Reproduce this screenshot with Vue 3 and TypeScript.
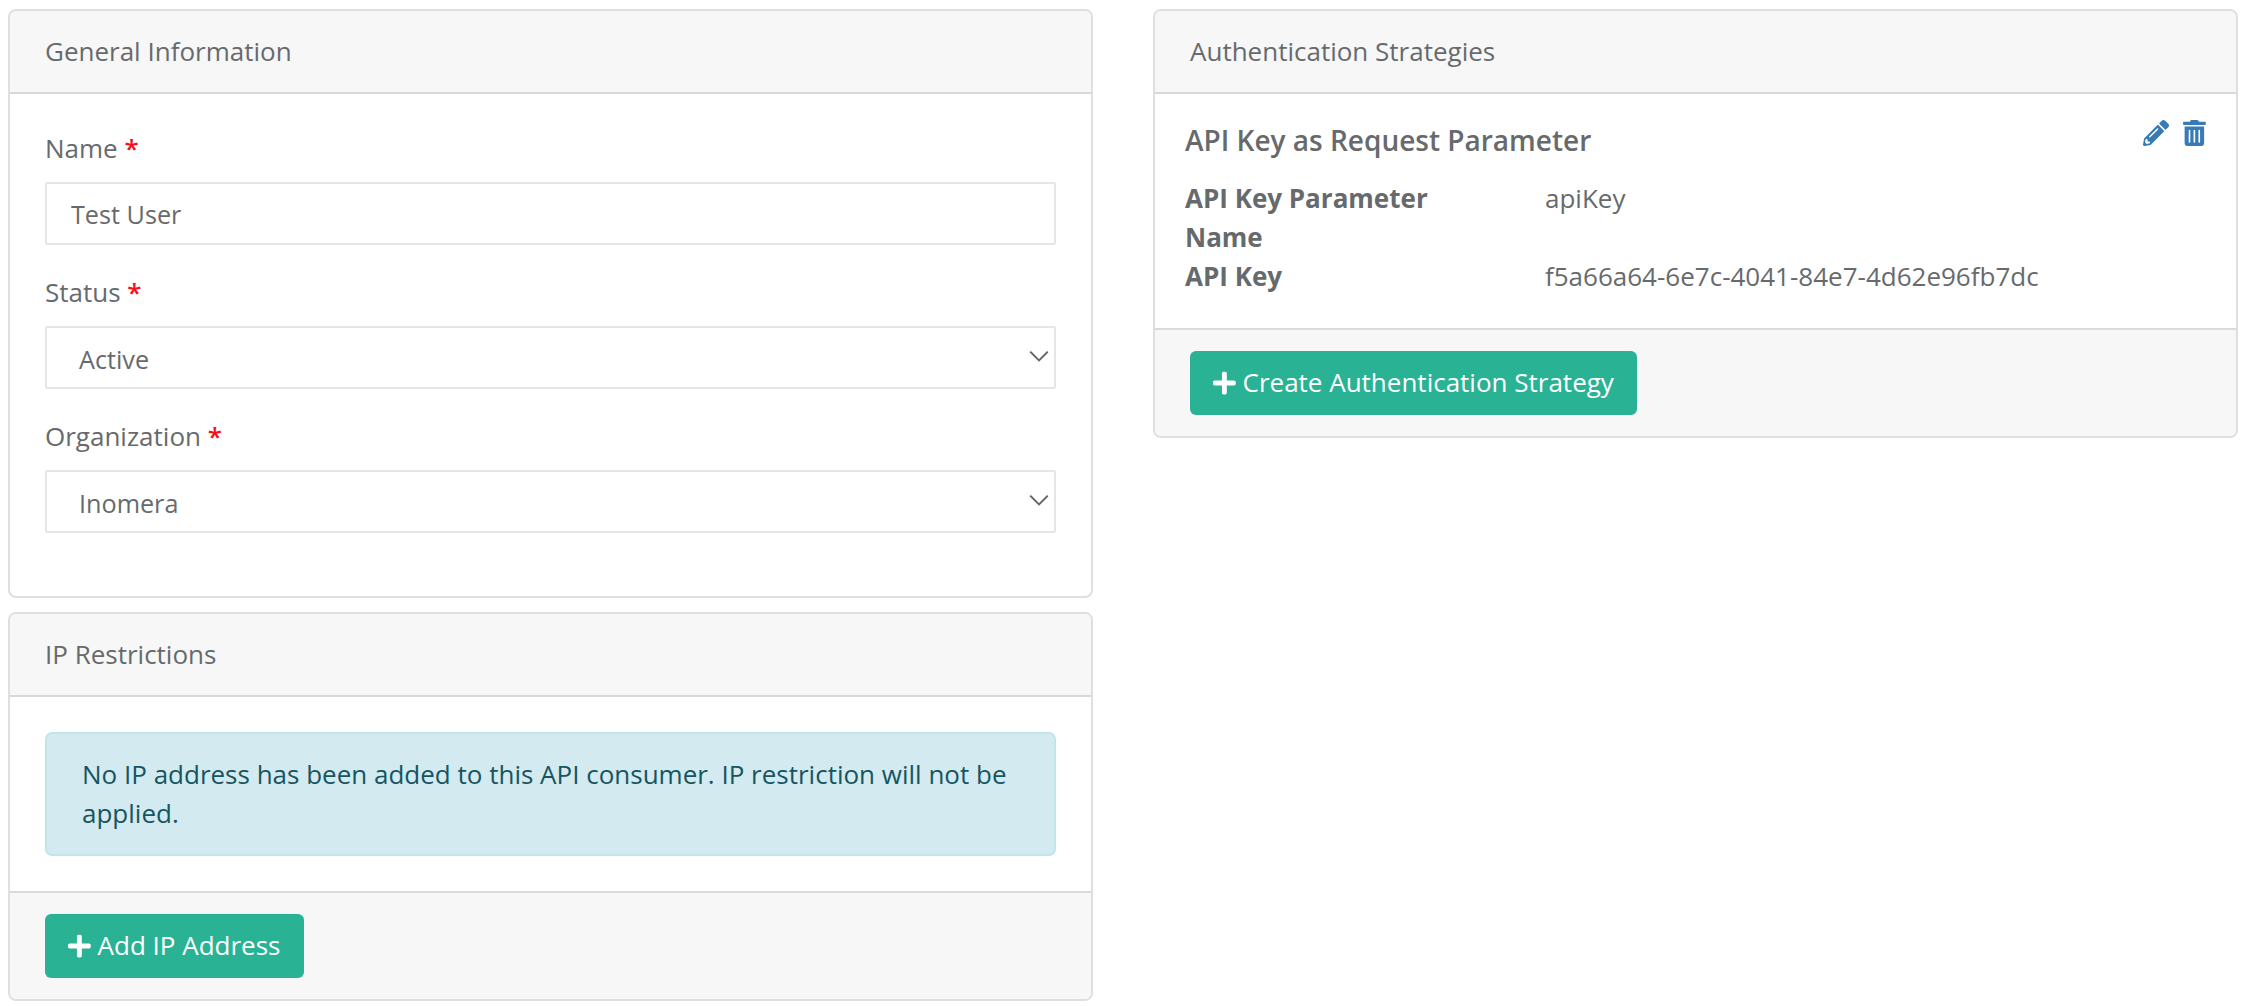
<script setup lang="ts">
import { ref } from 'vue'

const name = ref('Test User')
const status = 'Active'
const organization = 'Inomera'

const details = [
  { label: 'API Key Parameter Name', value: 'apiKey' },
  { label: 'API Key', value: 'f5a66a64-6e7c-4041-84e7-4d62e96fb7dc' },
]

const plusPath =
  'M416 208H272V64c0-17.67-14.33-32-32-32h-32c-17.67 0-32 14.33-32 32v144H32c-17.67 0-32 14.33-32 32v32c0 17.67 14.33 32 32 32h144v144c0 17.67 14.33 32 32 32h32c17.67 0 32-14.33 32-32V304h144c17.67 0 32-14.33 32-32v-32c0-17.67-14.33-32-32-32z'
</script>

<template>
  <main class="page">
    <div class="column">
      <section class="card">
        <header class="card-header">General Information</header>
        <div class="card-body form">
          <div class="field">
            <label for="name">Name <span class="required">*</span></label>
            <input id="name" v-model="name" class="control" type="text" />
          </div>
          <div class="field">
            <label>Status <span class="required">*</span></label>
            <div class="control select" role="combobox" tabindex="0">
              <span>{{ status }}</span>
              <svg class="chevron" viewBox="0 0 20 12"><path d="M1.8 1.3 10 9.4 18.2 1.3" /></svg>
            </div>
          </div>
          <div class="field">
            <label>Organization <span class="required">*</span></label>
            <div class="control select" role="combobox" tabindex="0">
              <span>{{ organization }}</span>
              <svg class="chevron" viewBox="0 0 20 12"><path d="M1.8 1.3 10 9.4 18.2 1.3" /></svg>
            </div>
          </div>
        </div>
      </section>

      <section class="card">
        <header class="card-header">IP Restrictions</header>
        <div class="card-body">
          <div class="alert">
            No IP address has been added to this API consumer. IP restriction will not be applied.
          </div>
        </div>
        <footer class="card-footer">
          <button class="btn" type="button">
            <svg class="plus" viewBox="0 0 448 512"><path :d="plusPath" /></svg>
            <span>Add IP Address</span>
          </button>
        </footer>
      </section>
    </div>

    <div class="column">
      <section class="card">
        <header class="card-header">Authentication Strategies</header>
        <div class="strategy">
          <div class="strategy-head">
            <h5>API Key as Request Parameter</h5>
            <div class="actions">
              <svg class="pencil" viewBox="0 0 512 512">
                <path
                  d="M497.9 142.1l-46.1 46.1c-4.7 4.7-12.3 4.7-17 0l-111-111c-4.7-4.7-4.7-12.3 0-17l46.1-46.1c18.7-18.7 49.1-18.7 67.9 0l60.1 60.1c18.8 18.7 18.8 49.1 0 67.9zM284.2 99.8L21.6 362.4.4 483.9c-2.9 16.4 11.4 30.6 27.8 27.8l121.5-21.3 262.6-262.6c4.7-4.7 4.7-12.3 0-17l-111-111c-4.8-4.7-12.4-4.7-17.1 0zM124.1 339.9c-5.5-5.5-5.5-14.3 0-19.8l154-154c5.5-5.5 14.3-5.5 19.8 0s5.5 14.3 0 19.8l-154 154c-5.5 5.5-14.3 5.5-19.8 0zM88 424h48v36.3l-64.5 11.3-31.1-31.1L51.7 376H88v48z"
                />
              </svg>
              <svg class="trash" viewBox="0 0 448 512">
                <path
                  d="M32 464a48 48 0 0 0 48 48h288a48 48 0 0 0 48-48V128H32zm272-256a16 16 0 0 1 32 0v224a16 16 0 0 1-32 0zm-96 0a16 16 0 0 1 32 0v224a16 16 0 0 1-32 0zm-96 0a16 16 0 0 1 32 0v224a16 16 0 0 1-32 0zM432 32H312l-9.4-18.7A24 24 0 0 0 281.1 0H166.8a23.72 23.72 0 0 0-21.4 13.3L136 32H16A16 16 0 0 0 0 48v32a16 16 0 0 0 16 16h416a16 16 0 0 0 16-16V48a16 16 0 0 0-16-16z"
                />
              </svg>
            </div>
          </div>
          <dl class="details">
            <template v-for="d in details" :key="d.label">
              <dt>{{ d.label }}</dt>
              <dd>{{ d.value }}</dd>
            </template>
          </dl>
        </div>
        <footer class="card-footer">
          <button class="btn" type="button">
            <svg class="plus" viewBox="0 0 448 512"><path :d="plusPath" /></svg>
            <span>Create Authentication Strategy</span>
          </button>
        </footer>
      </section>
    </div>
  </main>
</template>

<style>
body {
  background: #fff;
}
</style>

<style scoped>
* {
  box-sizing: border-box;
}

.page {
  display: grid;
  grid-template-columns: 1085px 1085px;
  column-gap: 60px;
  align-items: start;
  padding: 9px 8px 0;
  color: #676a6c;
  font-family: 'Open Sans', 'Noto Sans', sans-serif;
  font-size: 26px;
  line-height: 39px;
}

.column {
  display: flex;
  flex-direction: column;
  gap: 14px;
}

.card {
  border: 2px solid #dfdfdf;
  border-radius: 8px;
  background: #fff;
  overflow: hidden;
}

.card-header {
  padding: 21px 35px;
  border-bottom: 2px solid #d8d8d8;
  background: #f7f7f7;
}

.card-body {
  padding: 35px;
}

.card-footer {
  display: flex;
  padding: 21px 35px;
  border-top: 2px solid #dadada;
  background: #f7f7f7;
}

.field {
  display: flex;
  flex-direction: column;
  gap: 14px;
  margin-bottom: 28px;
}

.required {
  color: #fb0d1b;
  font-weight: 600;
}

.control {
  display: block;
  width: 100%;
  height: 63px;
  margin: 0;
  padding: 0 24px;
  border: 2px solid #e5e6e7;
  border-radius: 2px;
  background: #fff;
  color: inherit;
  font: inherit;
  font-size: 25.2px;
  outline: none;
}

.select {
  display: flex;
  align-items: center;
  justify-content: space-between;
  padding: 3px 5px 0 32px;
}

.chevron {
  width: 20px;
  height: 12px;
  margin-bottom: 4px;
  fill: none;
  stroke: #676a6c;
  stroke-width: 2;
  stroke-linecap: round;
}

.alert {
  padding: 21px 35px;
  border: 2px solid #c0e5eb;
  border-radius: 7px;
  background: #d3ebf0;
  color: #175560;
}

.btn {
  display: flex;
  align-items: center;
  gap: 6.8px;
  height: 64px;
  padding: 0 23.4px 0 23px;
  border: 0;
  border-radius: 6px;
  background: #29b294;
  color: #fff;
  font: inherit;
}

.btn span {
  padding-bottom: 2px;
}

.plus {
  width: 22.75px;
  height: 26px;
  margin-bottom: 1px;
  fill: currentColor;
}

.strategy {
  padding: 26px 30px 32px;
}

.strategy-head {
  display: flex;
  align-items: flex-start;
  justify-content: space-between;
}

h5 {
  margin: 0;
  padding: 1px 0 19px;
  font-size: 28px;
  font-weight: 600;
  line-height: 39px;
}

.actions {
  display: flex;
  gap: 14px;
  fill: #387ab5;
}

.pencil {
  width: 26px;
  height: 26px;
}

.trash {
  width: 22.75px;
  height: 26px;
}

.details {
  display: grid;
  grid-template-columns: 300px 1fr;
  column-gap: 60px;
  margin: 0;
}

dt {
  font-weight: 700;
}

dd {
  margin: 0;
}
</style>
